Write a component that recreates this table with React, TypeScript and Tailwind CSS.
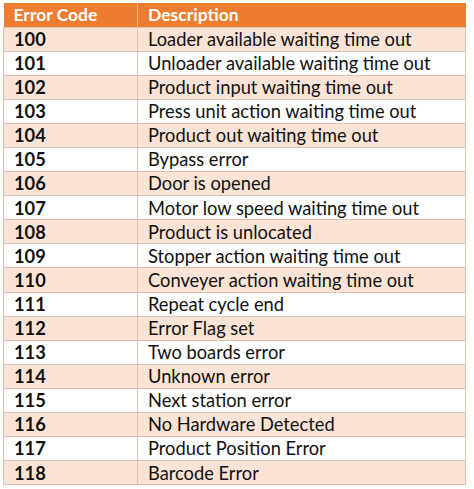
const rows: [string, string][] = [
  ["100", "Loader available waiting time out"],
  ["101", "Unloader available waiting time out"],
  ["102", "Product input waiting time out"],
  ["103", "Press unit action waiting time out"],
  ["104", "Product out waiting time out"],
  ["105", "Bypass error"],
  ["106", "Door is opened"],
  ["107", "Motor low speed waiting time out"],
  ["108", "Product is unlocated"],
  ["109", "Stopper action waiting time out"],
  ["110", "Conveyer action waiting time out"],
  ["111", "Repeat cycle end"],
  ["112", "Error Flag set"],
  ["113", "Two boards error"],
  ["114", "Unknown error"],
  ["115", "Next station error"],
  ["116", "No Hardware Detected"],
  ["117", "Product Position Error"],
  ["118", "Barcode Error"],
];

export default function App() {
  return (
    <div className="w-[474px] h-[489px] bg-white pt-[3px] pl-[3px] font-['Lato','Open_Sans',sans-serif] text-[18.3px] text-[#111]">
      <table className="w-[463px] border-collapse table-fixed">
        <colgroup>
          <col className="w-[134px]" />
          <col />
        </colgroup>
        <thead>
          <tr className="h-[24px] bg-[#ed7d31] text-white">
            <th className="text-left pl-[10px] font-bold leading-none border-r border-[#f4b183] text-[17.5px]">Error Code</th>
            <th className="text-left pl-[10px] font-bold leading-none text-[17.5px]">Description</th>
          </tr>
        </thead>
        <tbody>
          {rows.map(([code, desc], i) => (
            <tr key={code} className={`h-[24.1px] ${i % 2 === 0 ? "bg-[#fbe4d5]" : "bg-white"}`}>
              <td className="pl-[10px] font-bold leading-none border border-[#d9c3b5]">{code}</td>
              <td className="pl-[10px] leading-none border border-[#d9c3b5]">{desc}</td>
            </tr>
          ))}
        </tbody>
      </table>
    </div>
  );
}
